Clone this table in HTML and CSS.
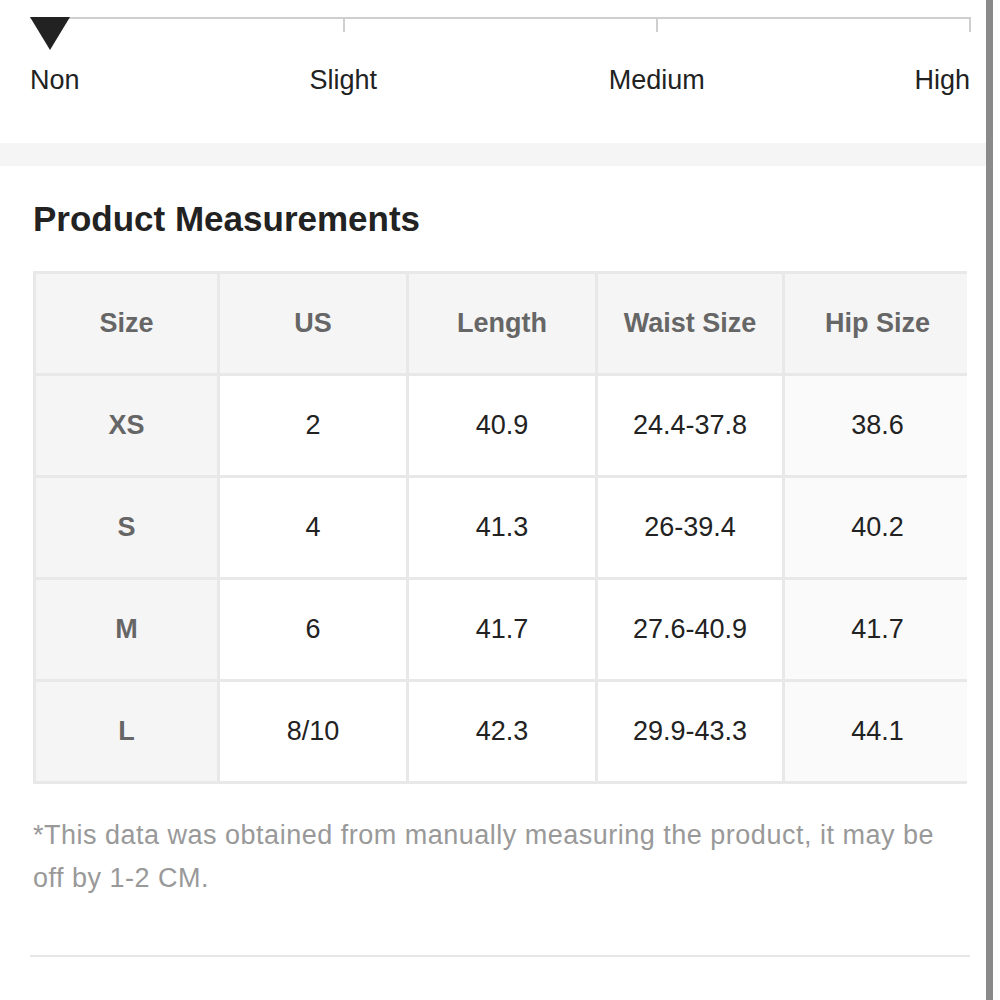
FILE: index.html
```html
<!DOCTYPE html>
<html>
<head>
<meta charset="utf-8">
<link rel="stylesheet" href="styles.css">
</head>
<body>
<div class="page">
  <main class="content">
    <section class="stretch">
      <div class="scale">
        <div class="seg"></div>
        <div class="seg"></div>
        <div class="seg"></div>
        <span class="marker"></span>
      </div>
      <div class="labels">
        <span class="lab lab-start">Non</span>
        <span class="lab lab-mid">Slight</span>
        <span class="lab lab-mid">Medium</span>
        <span class="lab lab-end">High</span>
      </div>
    </section>
    <div class="band"></div>
    <section class="measure">
      <h2 class="title">Product Measurements</h2>
      <div class="table-wrap">
        <table class="sizes">
          <thead>
            <tr><th>Size</th><th>US</th><th>Length</th><th>Waist Size</th><th>Hip Size</th></tr>
          </thead>
          <tbody>
            <tr><th>XS</th><td>2</td><td>40.9</td><td>24.4-37.8</td><td class="last">38.6</td></tr>
            <tr><th>S</th><td>4</td><td>41.3</td><td>26-39.4</td><td class="last">40.2</td></tr>
            <tr><th>M</th><td>6</td><td>41.7</td><td>27.6-40.9</td><td class="last">41.7</td></tr>
            <tr><th>L</th><td>8/10</td><td>42.3</td><td>29.9-43.3</td><td class="last">44.1</td></tr>
          </tbody>
        </table>
      </div>
      <p class="note">*This data was obtained from manually measuring the product, it may be off by 1-2 CM.</p>
    </section>
    <hr class="divider">
  </main>
  <div class="bar"></div>
</div>
</body>
</html>
```

FILE: styles.css
```css
html, body {
  margin: 0;
  padding: 0;
  background: #fff;
}
body {
  font-family: "Liberation Sans", Arial, sans-serif;
  color: #222;
}
.page {
  display: flex;
  width: 1000px;
  height: 1000px;
  overflow: hidden;
}
.content {
  width: 986px;
  flex: none;
}
.bar {
  width: 7px;
  height: 1000px;
  background: #8a8a8a;
  flex: none;
}
.stretch {
  padding: 17px 30px 0 30px;
  height: 143px;
  box-sizing: border-box;
}
.scale {
  position: relative;
  display: grid;
  grid-template-columns: 315px 313px 313px;
  width: 941px;
}
.seg {
  height: 13px;
  border-top: 2px solid #cfcfcf;
  border-right: 2px solid #cfcfcf;
}
.marker {
  position: absolute;
  left: 0;
  top: 0;
  width: 0;
  height: 0;
  border-left: 20px solid transparent;
  border-right: 20px solid transparent;
  border-top: 33px solid #222;
}
.labels {
  display: grid;
  grid-template-columns: 1fr 2fr 2fr 1fr;
  width: 940px;
  margin-top: 33px;
  font-size: 27px;
  line-height: 30px;
  color: #222;
}
.lab-start { text-align: left; }
.lab-mid { text-align: center; }
.lab-end { text-align: right; }
.band {
  height: 23px;
  background: #f5f5f5;
}
.measure {
  padding: 0 0 0 33px;
}
.title {
  margin: 0;
  padding-top: 33px;
  font-size: 35px;
  line-height: 40px;
  font-weight: bold;
  color: #222;
}
.table-wrap {
  margin-top: 32px;
  width: 934px;
  overflow: hidden;
}
.sizes {
  border-collapse: collapse;
  table-layout: fixed;
  width: 940px;
  font-size: 27px;
}
.sizes th, .sizes td {
  border: 3px solid #e8e8e8;
  height: 99px;
  padding: 0;
  text-align: center;
  vertical-align: middle;
}
.sizes th {
  background: #f5f5f5;
  color: #666;
  font-weight: bold;
}
.sizes td {
  background: #fff;
  color: #222;
  font-weight: normal;
}
.sizes td.last {
  background: #fafafa;
}
.sizes th:nth-child(1), .sizes td:nth-child(1) { width: 181px; }
.sizes th:nth-child(2), .sizes td:nth-child(2) { width: 186px; }
.sizes th:nth-child(3), .sizes td:nth-child(3) { width: 186px; }
.sizes th:nth-child(4), .sizes td:nth-child(4) { width: 184px; }
.sizes th:nth-child(5), .sizes td:nth-child(5) { width: 185px; }
.note {
  margin: 30px 0 0 0;
  width: 920px;
  font-size: 27px;
  letter-spacing: 0.5px;
  line-height: 43px;
  color: #999;
}
.divider {
  margin: 55px 16px 0 30px;
  border: 0;
  height: 2px;
  background: #e6e6e6;
}
```
